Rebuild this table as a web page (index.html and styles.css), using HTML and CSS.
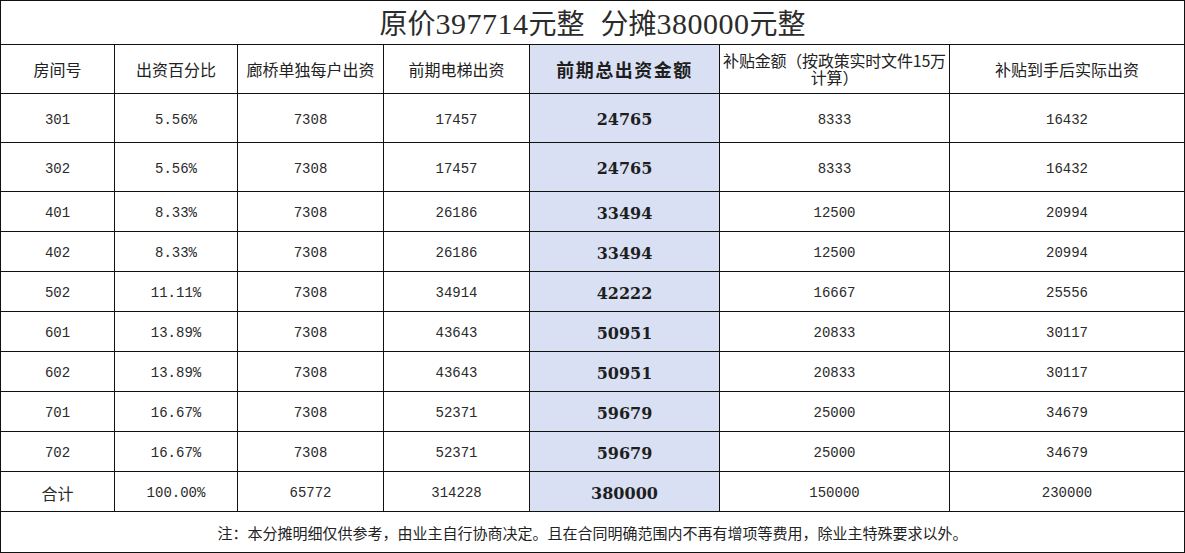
FILE: index.html
```html
<!DOCTYPE html>
<html lang="zh-CN">
<head>
<meta charset="utf-8">
<title>分摊明细</title>
<link rel="stylesheet" href="styles.css">
</head>
<body>
<table class="sheet">
  <colgroup>
    <col class="w1"><col class="w2"><col class="w3"><col class="w4"><col class="w5"><col class="w6"><col class="w7">
  </colgroup>
  <tr class="r-title">
    <td colspan="7" class="title"><span class="t-part">原价<span class="t-num">397714</span>元整</span><span class="t-part">分摊<span class="t-num">380000</span>元整</span></td>
  </tr>
  <tr class="r-head">
    <th>房间号</th>
    <th>出资百分比</th>
    <th>廊桥单独每户出资</th>
    <th>前期电梯出资</th>
    <th class="hl hl-head">前期总出资金额</th>
    <th class="wrap">补贴金额（按政策实时文件15万计算）</th>
    <th>补贴到手后实际出资</th>
  </tr>
  <tr class="r-tall"><td>301</td><td>5.56%</td><td>7308</td><td>17457</td><td class="hl">24765</td><td>8333</td><td>16432</td></tr>
  <tr class="r-tall"><td>302</td><td>5.56%</td><td>7308</td><td>17457</td><td class="hl">24765</td><td>8333</td><td>16432</td></tr>
  <tr class="r"><td>401</td><td>8.33%</td><td>7308</td><td>26186</td><td class="hl">33494</td><td>12500</td><td>20994</td></tr>
  <tr class="r"><td>402</td><td>8.33%</td><td>7308</td><td>26186</td><td class="hl">33494</td><td>12500</td><td>20994</td></tr>
  <tr class="r"><td>502</td><td>11.11%</td><td>7308</td><td>34914</td><td class="hl">42222</td><td>16667</td><td>25556</td></tr>
  <tr class="r"><td>601</td><td>13.89%</td><td>7308</td><td>43643</td><td class="hl">50951</td><td>20833</td><td>30117</td></tr>
  <tr class="r"><td>602</td><td>13.89%</td><td>7308</td><td>43643</td><td class="hl">50951</td><td>20833</td><td>30117</td></tr>
  <tr class="r"><td>701</td><td>16.67%</td><td>7308</td><td>52371</td><td class="hl">59679</td><td>25000</td><td>34679</td></tr>
  <tr class="r"><td>702</td><td>16.67%</td><td>7308</td><td>52371</td><td class="hl">59679</td><td>25000</td><td>34679</td></tr>
  <tr class="r"><td class="cjk">合计</td><td>100.00%</td><td>65772</td><td>314228</td><td class="hl">380000</td><td>150000</td><td>230000</td></tr>
  <tr class="r-note">
    <td colspan="7" class="note">注：本分摊明细仅供参考，由业主自行协商决定。且在合同明确范围内不再有增项等费用，除业主特殊要求以外。</td>
  </tr>
</table>
</body>
</html>
```

FILE: styles.css
```css
html, body {
  margin: 0;
  padding: 0;
  background: #ffffff;
}

.sheet {
  border-collapse: collapse;
  table-layout: fixed;
  width: 1184px;
  color: #2a2a2a;
  font-family: "Liberation Mono", "Noto Sans CJK SC", monospace;
  font-size: 14px;
}

.w1 { width: 114px; }
.w2 { width: 123px; }
.w3 { width: 146px; }
.w4 { width: 146px; }
.w5 { width: 190px; }
.w6 { width: 230px; }
.w7 { width: 235px; }

.sheet td,
.sheet th {
  border: 1px solid #111;
  padding: 0;
  text-align: center;
  vertical-align: middle;
  font-weight: normal;
}

.r-title { height: 44px; }
.r-head { height: 49px; }
.r-tall { height: 49px; }
.r { height: 40px; }
.r-note { height: 41px; }

.r-tall td,
.r td {
  padding-top: 3px;
}

.title {
  font-family: "Noto Sans CJK SC", sans-serif;
  font-size: 28px;
  color: #2b2b2b;
  line-height: 40px;
}

.t-part + .t-part { margin-left: 16px; }

.t-num {
  font-family: "Liberation Serif", serif;
  font-size: 30px;
  letter-spacing: 0.5px;
}

.r-head th {
  font-family: "Noto Sans CJK SC", sans-serif;
  font-size: 16px;
  color: #222;
}

.r-head th.wrap {
  line-height: 17px;
  padding: 0;
  letter-spacing: -0.2px;
}

.r-head th.hl-head {
  font-size: 18px;
  font-weight: bold;
  letter-spacing: 1.5px;
  color: #1e1e1e;
}

.hl {
  background: #dae0f3;
}

td.hl {
  font-family: "DejaVu Serif", serif;
  font-weight: bold;
  font-size: 16px;
  color: #1e1e1e;
}

.cjk {
  font-family: "Noto Sans CJK SC", sans-serif;
  font-size: 16px;
}

.note {
  font-family: "Noto Sans CJK SC", sans-serif;
  font-size: 15px;
  color: #222;
}
```
